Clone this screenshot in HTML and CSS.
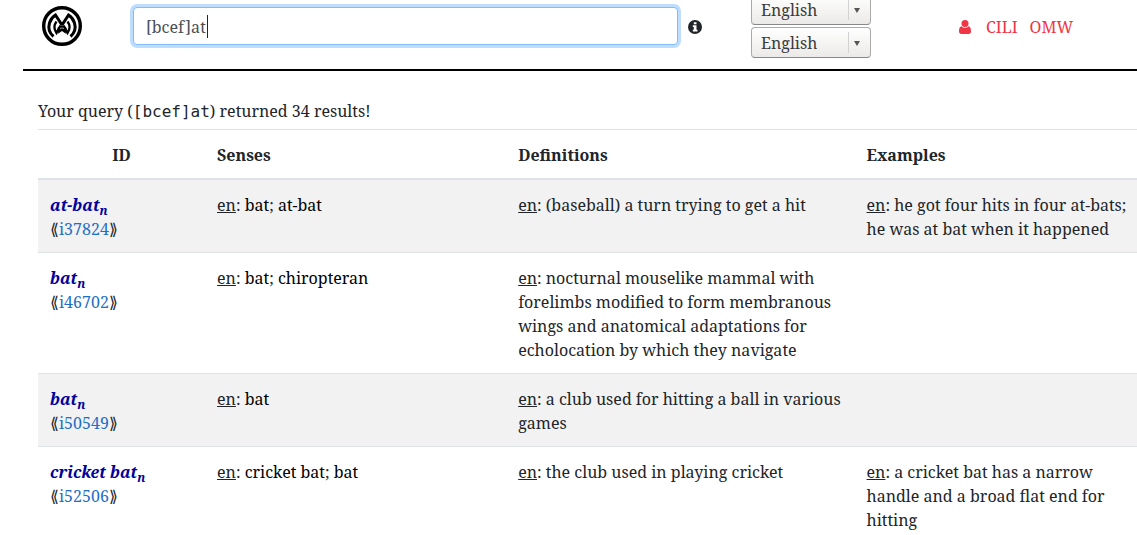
FILE: index.html
```html
<!DOCTYPE html>
<html lang="en">
<head>
<meta charset="utf-8">
<title>Search results</title>
<link rel="stylesheet" href="styles.css">
</head>
<body>
<header class="topbar">
  <a class="logo" href="#" aria-label="Home">
    <svg viewBox="0 0 40 40" width="40" height="40" fill="none" stroke="#000">
      <circle cx="20" cy="20" r="18.300" stroke-width="3.400"/>
      <path d="M11.500 30.500C7.500 27 6 22 7.500 17C8.500 13.500 10.500 11 13.500 9L19 17.500H21L26.500 9C29.500 11 31.500 13.500 32.500 17C34 22 32.500 27 28.500 30.500" stroke-width="3"/>
      <path d="M14.500 15.500C11.500 19.500 12 23.500 14.500 27L17.300 21V25.500L20 23.500L22.700 25.500V21L25.500 27C28 23.500 28.500 19.500 25.500 15.500M17 20.500H23" stroke-width="2.300"/>
    </svg>
  </a>
  <form class="search">
    <input class="search-box" type="text" value="[bcef]at" aria-label="Search">
    <svg class="info" viewBox="0 0 14 14" width="14" height="14" role="img" aria-label="Information">
      <circle cx="7" cy="7" r="7" fill="#212529"/>
      <path d="M5.800 2.200h2.700v2H5.800zM4.800 5.200h3.700v4.500h1v1.700H4.800V9.700h1V6.900h-1z" fill="#fff"/>
    </svg>
  </form>
  <div class="langs">
    <div class="picker"><select aria-label="Search language"><option>English</option></select></div>
    <div class="picker"><select aria-label="Display language"><option>English</option></select></div>
  </div>
  <nav class="links">
    <a class="user" href="#" aria-label="Account">
      <svg viewBox="0 0 12 14" width="12" height="14" fill="#f03545">
        <circle cx="6" cy="3.600" r="3.500"/>
        <path d="M2.500 6.300C.8 6.600 0 8.500 0 11.300C0 13 .9 14 2.300 14H9.700C11.100 14 12 13 12 11.300C12 8.500 11.200 6.600 9.500 6.300C8.500 7.300 7.400 7.800 6 7.800S3.500 7.300 2.500 6.300Z"/>
      </svg>
    </a>
    <a href="#">CILI</a>
    <a href="#">OMW</a>
  </nav>
</header>
<main class="results">
  <p class="summary">Your query (<code>[bcef]at</code>) returned 34 results!</p>
  <table class="synsets">
    <colgroup><col class="c-id"><col class="c-senses"><col class="c-defs"><col></colgroup>
    <thead>
      <tr><th class="id-head">ID</th><th>Senses</th><th>Definitions</th><th>Examples</th></tr>
    </thead>
    <tbody>
      <tr>
        <td><b class="lemma">at-bat<sub>n</sub></b><br>⟪<a href="#">i37824</a>⟫</td>
        <td><u>en</u>: <span class="sense">bat</span>; <span class="sense">at-bat</span></td>
        <td><u>en</u>: (baseball) a turn trying to get a hit</td>
        <td><u>en</u>: he got four hits in four at-bats; he was at bat when it happened</td>
      </tr>
      <tr>
        <td><b class="lemma">bat<sub>n</sub></b><br>⟪<a href="#">i46702</a>⟫</td>
        <td><u>en</u>: <span class="sense">bat</span>; <span class="sense">chiropteran</span></td>
        <td><u>en</u>: nocturnal mouselike mammal with forelimbs modified to form membranous wings and anatomical adaptations for echolocation by which they navigate</td>
        <td></td>
      </tr>
      <tr>
        <td><b class="lemma">bat<sub>n</sub></b><br>⟪<a href="#">i50549</a>⟫</td>
        <td><u>en</u>: <span class="sense">bat</span></td>
        <td><u>en</u>: a club used for hitting a ball in various games</td>
        <td></td>
      </tr>
      <tr>
        <td><b class="lemma">cricket bat<sub>n</sub></b><br>⟪<a href="#">i52506</a>⟫</td>
        <td><u>en</u>: <span class="sense">cricket bat</span>; <span class="sense">bat</span></td>
        <td><u>en</u>: the club used in playing cricket</td>
        <td><u>en</u>: a cricket bat has a narrow handle and a broad flat end for hitting</td>
      </tr>
    </tbody>
  </table>
</main>
</body>
</html>
```
FILE: styles.css
```css
* { box-sizing: border-box; }
body {
  margin: 0 0 0 23px;
  background: #fff;
  color: #212529;
  font: 16px/24px "Noto Serif", "Droid Serif", "DejaVu Serif Condensed", "DejaVu Serif", serif;
}
a { color: #1f6fc5; text-decoration: none; }
svg { display: block; }

.topbar {
  display: flex;
  align-items: center;
  margin-top: -6px;
  padding-bottom: 11px;
  border-bottom: 2px solid #000;
}
.logo { margin: 0 51px 0 19px; }
.search { display: flex; flex: 1; align-items: center; gap: 10px; }
.search-box {
  flex: 1;
  min-width: 0;
  height: 38px;
  padding: 7px 12px 5px;
  border: 1px solid #80bdff;
  border-radius: 4px;
  outline: none;
  box-shadow: 0 0 0 3px #bfdeff;
  background: linear-gradient(#212529, #212529) 73px 7px / 1px 23px no-repeat #fff;
  color: #495057;
  font: inherit;
}
.info { margin-top: 2px; }
.langs { display: grid; gap: 2px; width: 120px; margin-left: 49px; }
.picker { position: relative; }
.picker select {
  display: block;
  width: 100%;
  height: 31px;
  padding: 0 9px;
  appearance: none;
  border: 1px solid #aaa;
  border-bottom-color: #888;
  border-radius: 4px;
  background: linear-gradient(#fff, #eceae8);
  color: #3b3b3b;
  font: inherit;
}
.picker::before {
  content: "";
  position: absolute;
  top: 5px;
  right: 22px;
  bottom: 5px;
  border-left: 1px solid #d2d2d2;
}
.picker::after {
  content: "";
  position: absolute;
  top: 14px;
  right: 11px;
  border: 3px solid transparent;
  border-top: 5px solid #555;
  border-bottom: 0;
}
.links { display: flex; align-items: center; gap: 12px; width: 178px; margin: 2px 0 0 88px; }
.links a { color: #f03545; }
.links .user { margin-right: 3px; }

.results { padding-left: 15px; }
.summary { margin: 28px 0 6px; }
code { font: 16px/20px "DejaVu Sans Mono", monospace; }
.synsets { width: 100%; table-layout: fixed; border-collapse: separate; border-spacing: 0; }
.c-id { width: 15.2%; }
.c-senses { width: 27.4%; }
.c-defs { width: 31.7%; }
th, td { padding: 13px 12px 11px; border-top: 1px solid #dee2e6; text-align: left; vertical-align: top; }
th:last-child, td:last-child { padding-right: 4px; }
th { border-bottom: 2px solid #dee2e6; }
.id-head { text-align: center; }
tbody tr:first-child td { border-top: 0; }
tbody tr:nth-child(odd) { background: #f2f2f2; }
.lemma { color: #00009c; font-style: italic; }
sub { position: relative; bottom: -4px; font-size: 12px; line-height: 0; vertical-align: baseline; }
.sense { color: #000; }
```
